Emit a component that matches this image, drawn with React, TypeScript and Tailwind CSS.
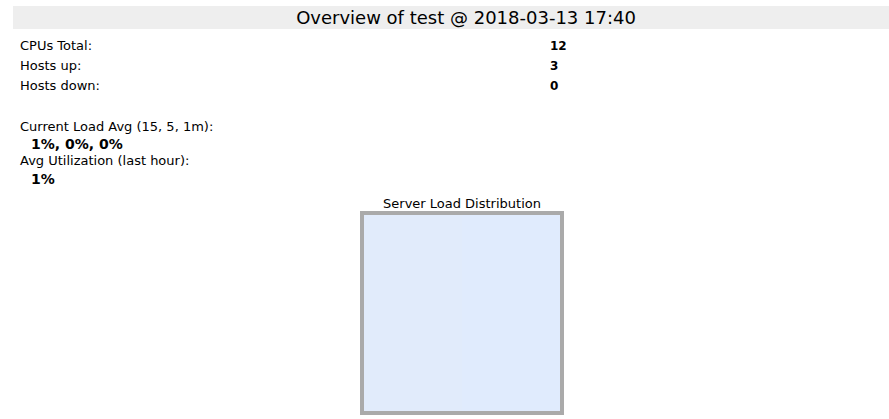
import React from "react";

const stats = [
  { label: "CPUs Total:", value: "12" },
  { label: "Hosts up:", value: "3" },
  { label: "Hosts down:", value: "0" },
];

export default function App() {
  return (
    <div className="w-[889px] h-[419px] overflow-hidden bg-white text-black font-['DejaVu_Sans',Verdana,sans-serif] text-[13px]">
      <div className="ml-[13px] mt-[6px] w-[906px] h-[23px] bg-[#eeeeee] flex items-center justify-center text-[18px] leading-none">
        Overview of test @ 2018-03-13 17:40
      </div>

      <div className="pl-[20px] pt-[7px] flex flex-col">
        {stats.map((s) => (
          <div key={s.label} className="flex h-[20px] items-center">
            <span className="w-[530px]">{s.label}</span>
            <span className="font-bold text-[12px]">{s.value}</span>
          </div>
        ))}
      </div>

      <div className="pl-[20px] pt-[22px] flex flex-col leading-[18px]">
        <span>Current Load Avg (15, 5, 1m):</span>
        <span className="pl-[11px] font-bold text-[14px] leading-[16px]">1%, 0%, 0%</span>
        <span>Avg Utilization (last hour):</span>
        <span className="pl-[11px] font-bold text-[14px]">1%</span>
      </div>

      <div className="flex flex-col items-center ml-[360px] w-[204px] mt-[8px]">
        <span className="leading-[15px]">Server Load Distribution</span>
        <div className="w-[204px] h-[204px] border-4 border-[#aaaaaa] flex">
          <div className="flex-1 bg-[#e1ebfb]" />
          <div className="flex-1 bg-[#e0ebfd]" />
        </div>
      </div>
    </div>
  );
}
